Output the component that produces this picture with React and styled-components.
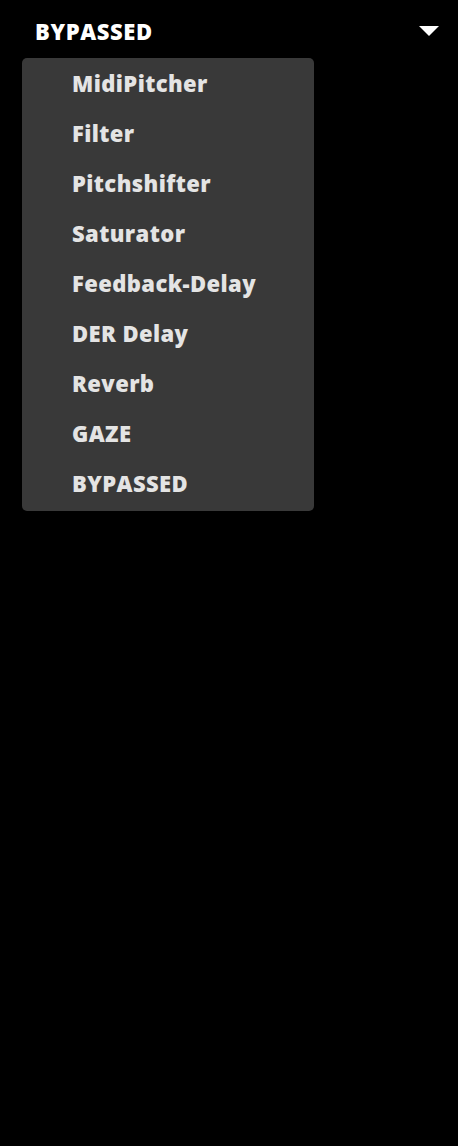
import React from "react";
import styled, { createGlobalStyle } from "styled-components";

const GlobalStyle = createGlobalStyle`
  html, body {
    margin: 0;
    padding: 0;
    background: #000;
  }
  body {
    font-family: "Open Sans", Lato, sans-serif;
  }
`;

const Page = styled.div`
  width: 458px;
  min-height: 1146px;
  background: #000;
  position: relative;
`;

const Header = styled.div`
  display: flex;
  align-items: center;
  justify-content: space-between;
  height: 62px;
  padding: 0 19px 0 35px;
  box-sizing: border-box;
  cursor: pointer;
`;

const Current = styled.span`
  color: #fff;
  font-size: 22px;
  font-weight: 800;
  letter-spacing: 0.6px;
`;

const Caret = styled.svg`
  width: 20px;
  height: 10px;
  display: block;
`;

const Menu = styled.ul`
  position: absolute;
  top: 58px;
  left: 22px;
  width: 292px;
  margin: 0;
  padding: 0 0 3px;
  list-style: none;
  background: #393939;
  border-radius: 5px;
`;

const Item = styled.li`
  height: 50px;
  display: flex;
  align-items: center;
  padding-left: 50px;
  color: #e4e4e4;
  font-size: 22px;
  font-weight: 800;
  letter-spacing: 0.4px;
  cursor: pointer;
`;

const effects = [
  "MidiPitcher",
  "Filter",
  "Pitchshifter",
  "Saturator",
  "Feedback-Delay",
  "DER Delay",
  "Reverb",
  "GAZE",
  "BYPASSED",
];

export default function App() {
  const selected = "BYPASSED";
  return (
    <Page>
      <GlobalStyle />
      <Header>
        <Current>{selected}</Current>
        <Caret viewBox="0 0 20 10">
          <path d="M0 0 H20 L10 10 Z" fill="#fff" />
        </Caret>
      </Header>
      <Menu>
        {effects.map((name) => (
          <Item key={name}>{name}</Item>
        ))}
      </Menu>
    </Page>
  );
}
